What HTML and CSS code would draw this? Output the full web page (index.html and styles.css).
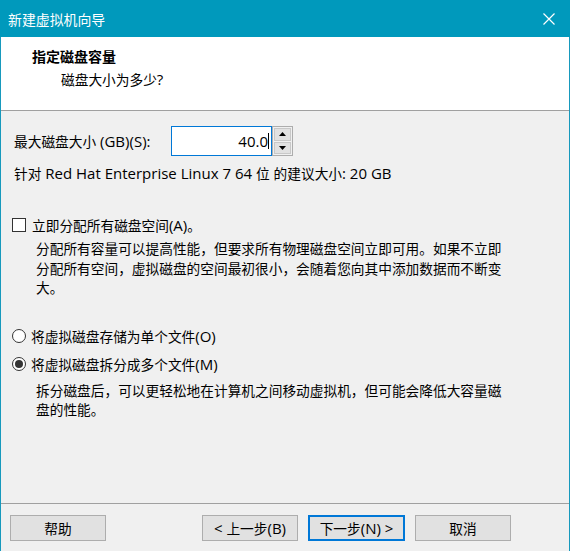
FILE: index.html
```html
<!DOCTYPE html>
<html lang="zh-CN">
<head>
<meta charset="utf-8">
<title>新建虚拟机向导</title>
<link rel="stylesheet" href="styles.css">
</head>
<body>
<div class="window">
  <div class="titlebar">
    <span class="title">新建虚拟机向导</span>
    <svg class="close" width="12" height="12" viewBox="0 0 12 12"><path d="M0.5 0.5 L11.5 11.5 M11.5 0.5 L0.5 11.5" stroke="#fff" stroke-width="1.2" fill="none"/></svg>
  </div>
  <div class="header">
    <div class="heading">指定磁盘容量</div>
    <div class="subheading">磁盘大小为多少<span class="en">?</span></div>
  </div>
  <div class="content">
    <div class="size-row">
      <span class="size-label">最大磁盘大小<span class="en"> (GB)(S):</span></span>
      <div class="field"><span class="value en">40.0</span><span class="caret"></span></div>
      <div class="spinner">
        <div class="spin-btn"><svg width="7" height="4" viewBox="0 0 7 4"><path d="M3.5 0 L7 4 L0 4 Z" fill="#000"/></svg></div>
        <div class="spin-btn"><svg width="7" height="4" viewBox="0 0 7 4"><path d="M0 0 L7 0 L3.5 4 Z" fill="#000"/></svg></div>
      </div>
    </div>
    <div class="recommend">针对<span class="en"> Red Hat Enterprise Linux 7 64 </span>位<span class="en"> </span>的建议大小<span class="en">: 20 GB</span></div>
    <div class="option check-row"><span class="checkbox"></span><span>立即分配所有磁盘空间<span class="en">(A)</span>。</span></div>
    <div class="desc">分配所有容量可以提高性能，但要求所有物理磁盘空间立即可用。如果不立即<br>分配所有空间，虚拟磁盘的空间最初很小，会随着您向其中添加数据而不断变<br>大。</div>
    <div class="option radio-row first"><span class="radio"></span><span>将虚拟磁盘存储为单个文件<span class="en">(O)</span></span></div>
    <div class="option radio-row second"><span class="radio checked"></span><span>将虚拟磁盘拆分成多个文件<span class="en">(M)</span></span></div>
    <div class="desc desc2">拆分磁盘后，可以更轻松地在计算机之间移动虚拟机，但可能会降低大容量磁<br>盘的性能。</div>
  </div>
  <div class="footer">
    <button class="btn help">帮助</button>
    <button class="btn"><span class="en">&lt; </span>上一步<span class="en">(B)</span></button>
    <button class="btn default">下一步<span class="en">(N) &gt;</span></button>
    <button class="btn">取消</button>
  </div>
</div>
</body>
</html>
```
FILE: styles.css
```css
* { box-sizing: border-box; }
html, body { margin: 0; padding: 0; }
body {
  font-family: "Noto Sans CJK SC", sans-serif;
  font-size: 13.7px;
  color: #000;
  background: #f0f0f0;
}
.en {
  font-family: "Open Sans", "Noto Sans CJK SC", sans-serif;
  font-size: 15px;
}
.window {
  width: 570px;
  height: 551px;
  display: flex;
  flex-direction: column;
  background: #f0f0f0;
  border-left: 1px solid #1799bd;
  border-right: 1px solid #1799bd;
}
.titlebar {
  height: 37px;
  flex: none;
  background: #0099bc;
  color: #fff;
  display: flex;
  align-items: center;
  justify-content: space-between;
  padding: 0 15px 0 8px;
  margin: 0 -1px;
}
.title { font-size: 13.9px; line-height: 20px; }
.close { display: block; }
.header {
  flex: none;
  height: 74px;
  background: #fff;
  border-bottom: 1px solid #a0a0a0;
  padding-top: 9px;
}
.heading {
  font-weight: bold;
  font-size: 14px;
  line-height: 20px;
  padding-left: 31px;
}
.subheading {
  line-height: 20px;
  margin-top: 3px;
  padding-left: 60px;
}
.content {
  flex: 1;
  padding-left: 13px;
}
.size-row {
  display: flex;
  align-items: center;
  margin-top: 15px;
  height: 30px;
}
.size-label { width: 157px; line-height: 20px; white-space: nowrap; }
.field {
  width: 101px;
  height: 30px;
  background: #fff;
  border: 1px solid #0078d7;
  display: flex;
  align-items: center;
  justify-content: flex-end;
  padding-right: 2px;
}
.value { line-height: 20px; }
.caret { width: 1px; height: 16px; background: #000; }
.spinner {
  width: 21px;
  height: 30px;
  border: 1px solid #adadad;
  display: flex;
  flex-direction: column;
  gap: 1px;
  padding: 1px;
  background: #f0f0f0;
}
.spin-btn {
  flex: 1;
  background: #e1e1e1;
  border: 1px solid #c8c8c8;
  display: flex;
  align-items: center;
  justify-content: center;
}
.spin-btn svg { display: block; }
.recommend { line-height: 20px; margin-top: 7px; white-space: nowrap; }
.option {
  display: flex;
  align-items: center;
  line-height: 20px;
}
.check-row { margin-top: 32px; margin-left: -2px; gap: 6px; }
.checkbox {
  width: 14px;
  height: 14px;
  border: 1px solid #333;
  background: #fff;
  flex: none;
}
.desc {
  line-height: 19.5px;
  margin-top: 4px;
  padding-left: 22px;
  white-space: nowrap;
}
.radio-row { margin-left: -2px; gap: 5px; }
.radio-row.first { margin-top: 28px; }
.radio-row.second { margin-top: 8px; }
.radio {
  width: 14px;
  height: 14px;
  border: 1px solid #333;
  border-radius: 50%;
  background: #fff;
  flex: none;
  display: flex;
  align-items: center;
  justify-content: center;
}
.radio.checked::after {
  content: "";
  width: 8px;
  height: 8px;
  border-radius: 50%;
  background: #333;
}
.desc2 { margin-top: 7px; }
.footer {
  flex: none;
  height: 48px;
  border-top: 1px solid #a0a0a0;
  display: flex;
  align-items: flex-start;
  gap: 10px;
  padding: 11px 58px 0 9px;
}
.btn {
  width: 96px;
  height: 26px;
  background: #e1e1e1;
  border: 1px solid #adadad;
  font-family: "Noto Sans CJK SC", sans-serif;
  font-size: 13.7px;
  line-height: 20px;
  color: #000;
  padding: 0;
  margin: 0;
}
.btn .en { font-size: 15px; }
.btn.help { margin-right: auto; }
.btn.default { border: 2px solid #0078d7; width: 97px; }
```
